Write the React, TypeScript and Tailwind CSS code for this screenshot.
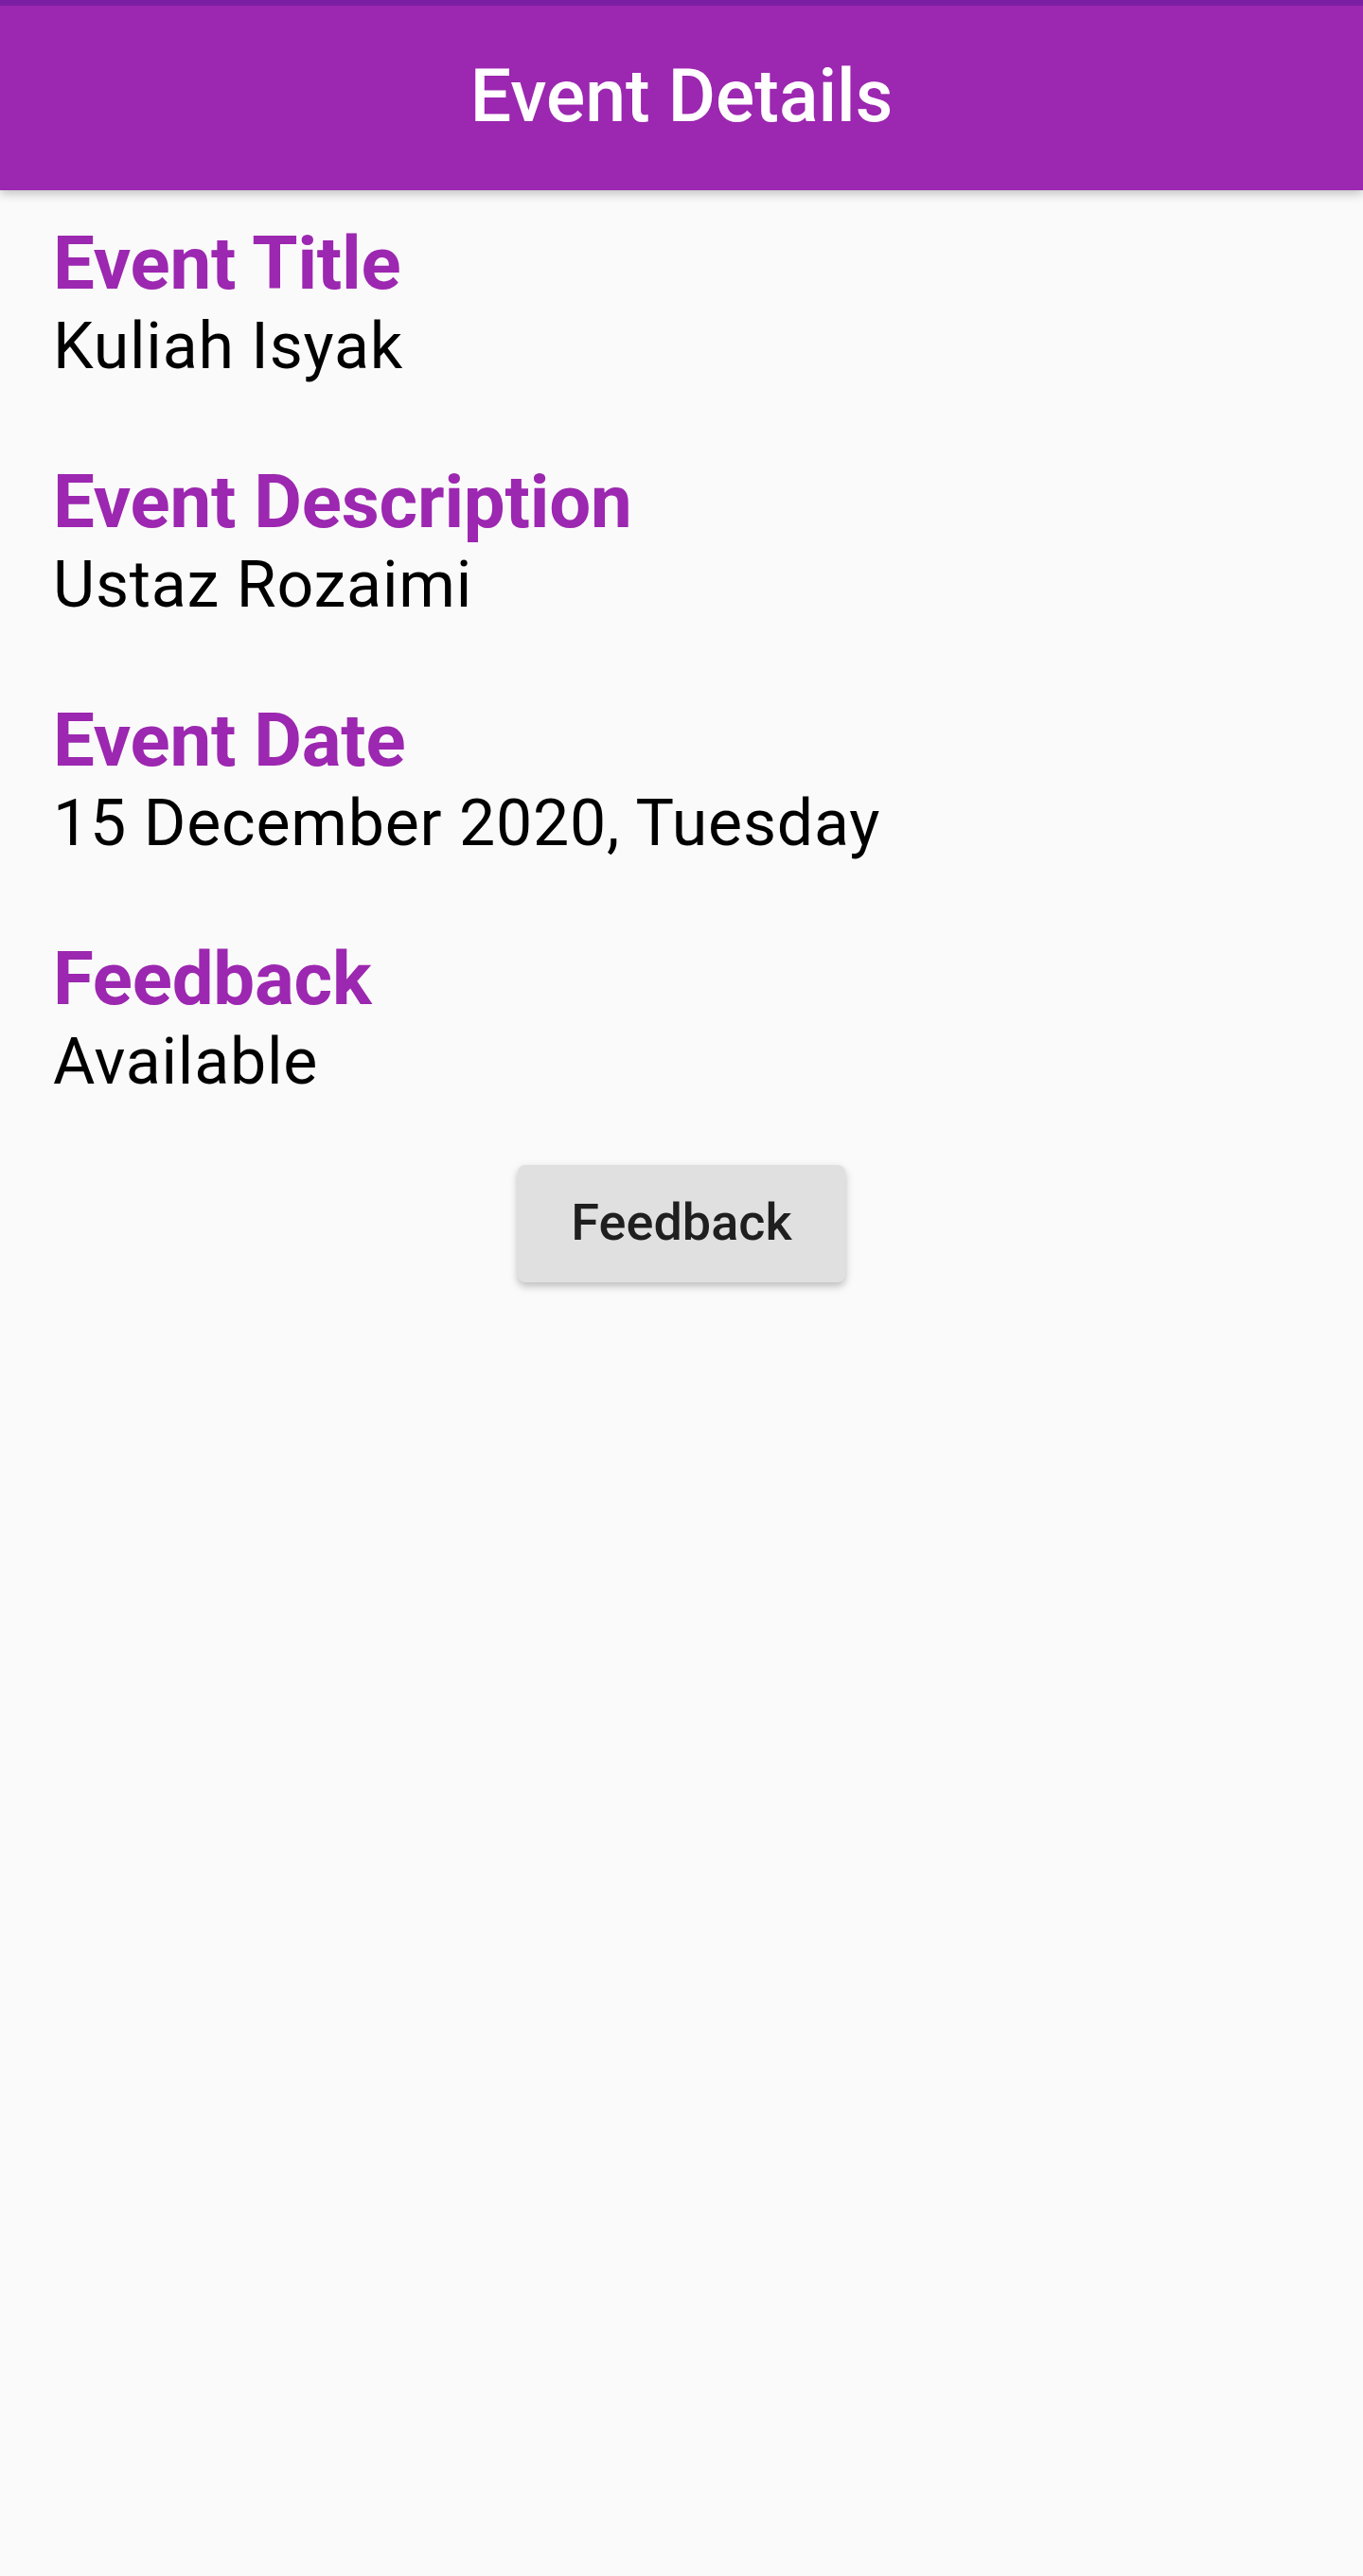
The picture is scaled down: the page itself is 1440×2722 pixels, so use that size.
import React from "react";

const details = [
  { label: "Event Title", value: "Kuliah Isyak" },
  { label: "Event Description", value: "Ustaz Rozaimi" },
  { label: "Event Date", value: "15 December 2020, Tuesday" },
  { label: "Feedback", value: "Available" },
];

export default function App() {
  return (
    <div className="min-h-[2722px] bg-[#fafafa] font-['Roboto',sans-serif]">
      {/* app bar */}
      <div className="relative z-10 shadow-[0_4px_10px_rgba(0,0,0,0.22)]">
        <div className="h-[6px] bg-[#7b1fa2]" />
        <div className="flex h-[195px] items-center justify-center bg-[#9c27b0] pb-[4px]">
          <h1 className="text-[77px] font-medium leading-[78px] text-white">Event Details</h1>
        </div>
      </div>

      <div className="px-[56px] pt-[32px]">
        <div className="flex flex-col gap-[78px]">
          {details.map((d) => (
            <div key={d.label}>
              <div className="text-[78px] font-bold leading-[92px] tracking-[-0.2px] text-[#9c27b0]">{d.label}</div>
              <div className="text-[68px] leading-[82px] tracking-[0.8px] text-black">{d.value}</div>
            </div>
          ))}
        </div>

        <div className="mt-[68px] flex justify-center">
          <button className="flex h-[124px] w-[346px] items-center justify-center rounded-[8px] bg-[#e0e0e0] pb-[2px] text-[54px] font-medium leading-[56px] text-[#1f1f1f] shadow-[0_4px_8px_rgba(0,0,0,0.25)]">
            Feedback
          </button>
        </div>
      </div>
    </div>
  );
}
